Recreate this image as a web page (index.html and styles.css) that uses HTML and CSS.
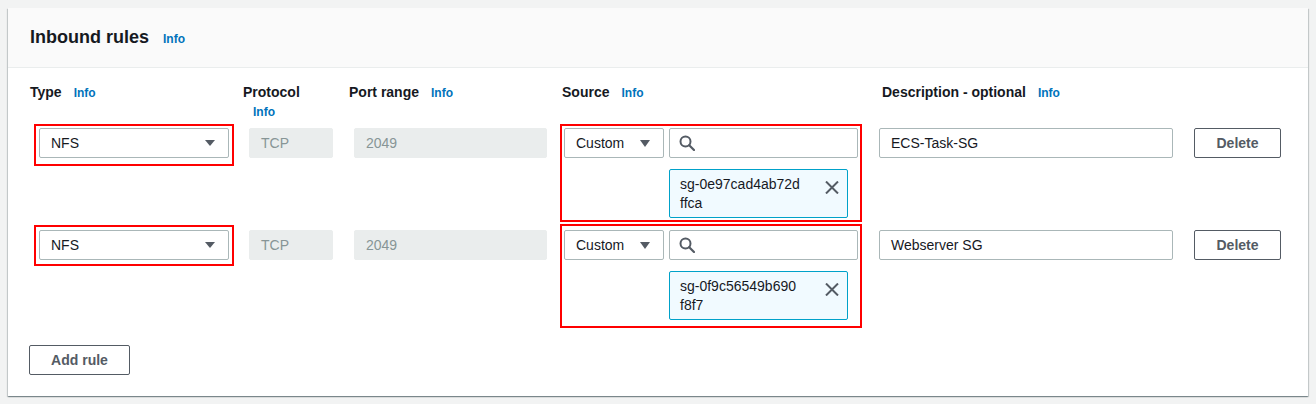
FILE: index.html
```html
<!DOCTYPE html>
<html>
<head>
<meta charset="utf-8">
<link rel="stylesheet" href="styles.css">
</head>
<body>
<div class="card">
  <div class="card-header">
    <h2 class="title">Inbound rules</h2><a class="info info-title">Info</a>
  </div>
  <div class="card-body">
    <div class="labels">
      <div class="lab lab-type">Type<a class="info">Info</a></div>
      <div class="lab lab-proto">Protocol<a class="info info-block">Info</a></div>
      <div class="lab lab-port">Port range<a class="info">Info</a></div>
      <div class="lab lab-source">Source<a class="info">Info</a></div>
      <div class="lab lab-desc">Description - optional<a class="info">Info</a></div>
    </div>

    <div class="rule-row">
      <div class="field select type-select marked marked-type">
        <span>NFS</span>
        <svg class="caret" width="10" height="6" viewBox="0 0 10 6"><polygon points="0,0 10,0 5,6" fill="#545b64"/></svg>
      </div>
      <div class="field disabled proto">TCP</div>
      <div class="field disabled port">2049</div>
      <div class="source marked marked-source">
        <div class="source-top">
          <div class="field select custom">
            <span>Custom</span>
            <svg class="caret" width="10" height="7" viewBox="0 0 10 7"><polygon points="0,0 10,0 5,7" fill="#545b64"/></svg>
          </div>
          <div class="field search">
            <svg width="16" height="16" viewBox="0 0 16 16"><circle cx="6.5" cy="6.5" r="5" fill="none" stroke="#545b64" stroke-width="2"/><line x1="10.2" y1="10.2" x2="15" y2="15" stroke="#545b64" stroke-width="2.2" stroke-linecap="round"/></svg>
          </div>
        </div>
        <div class="token">
          <span class="token-text">sg-0e97cad4ab72d<br>ffca</span>
          <svg class="token-x" width="14" height="13" viewBox="0 0 14 13"><path d="M1 0.5 L13 12.5 M13 0.5 L1 12.5" stroke="#545b64" stroke-width="2" fill="none"/></svg>
        </div>
      </div>
      <div class="field desc">ECS-Task-SG</div>
      <button class="btn delete">Delete</button>
    </div>

    <div class="rule-row">
      <div class="field select type-select marked marked-type2">
        <span>NFS</span>
        <svg class="caret" width="10" height="6" viewBox="0 0 10 6"><polygon points="0,0 10,0 5,6" fill="#545b64"/></svg>
      </div>
      <div class="field disabled proto">TCP</div>
      <div class="field disabled port">2049</div>
      <div class="source marked marked-source2">
        <div class="source-top">
          <div class="field select custom">
            <span>Custom</span>
            <svg class="caret" width="10" height="7" viewBox="0 0 10 7"><polygon points="0,0 10,0 5,7" fill="#545b64"/></svg>
          </div>
          <div class="field search">
            <svg width="16" height="16" viewBox="0 0 16 16"><circle cx="6.5" cy="6.5" r="5" fill="none" stroke="#545b64" stroke-width="2"/><line x1="10.2" y1="10.2" x2="15" y2="15" stroke="#545b64" stroke-width="2.2" stroke-linecap="round"/></svg>
          </div>
        </div>
        <div class="token">
          <span class="token-text">sg-0f9c56549b690<br>f8f7</span>
          <svg class="token-x" width="14" height="13" viewBox="0 0 14 13"><path d="M1 0.5 L13 12.5 M13 0.5 L1 12.5" stroke="#545b64" stroke-width="2" fill="none"/></svg>
        </div>
      </div>
      <div class="field desc">Webserver SG</div>
      <button class="btn delete">Delete</button>
    </div>

    <button class="btn add">Add rule</button>
  </div>
</div>
</body>
</html>
```

FILE: styles.css
```css
* { box-sizing: border-box; }
html, body { margin: 0; padding: 0; }
body {
  background: #f2f3f3;
  font-family: "Liberation Sans", Arial, sans-serif;
  color: #16191f;
  font-size: 14px;
  padding: 8px;
}
.card {
  width: 1300px;
  height: 388px;
  background: #fff;
  box-shadow: 0 1px 1px 0 rgba(0, 28, 36, 0.3), 1px 1px 1px 0 rgba(0, 28, 36, 0.15), -1px 1px 1px 0 rgba(0, 28, 36, 0.15);
}
.card-header {
  background: #fafafa;
  border-bottom: 1px solid #eaeded;
  height: 60px;
  padding: 18px 0 0 22px;
  display: flex;
  align-items: baseline;
}
.title {
  margin: 0;
  font-size: 18px;
  line-height: 22px;
  font-weight: bold;
}
.info {
  color: #0073bb;
  font-size: 12px;
  font-weight: bold;
  margin-left: 12px;
}
.info-title { margin-left: 14px; }
.card-body {
  padding: 13px 0 0 21px;
}
.labels {
  display: flex;
  height: 40px;
  margin-bottom: 7px;
  margin-left: 1px;
}
.lab {
  font-weight: bold;
  line-height: 22px;
}
.lab-type { width: 213px; }
.lab-proto { width: 106px; }
.lab-port { width: 213px; }
.lab-source { width: 320px; }
.info-block {
  display: block;
  line-height: 18px;
  margin-left: 10px;
}
.rule-row {
  display: flex;
  align-items: flex-start;
  padding-left: 10px;
  height: 90px;
  margin-bottom: 12px;
}
.field {
  height: 30px;
  border: 1px solid #aab7b8;
  border-radius: 2px;
  padding: 0 11px;
  display: flex;
  align-items: center;
  background: #fff;
  line-height: 20px;
}
.select { justify-content: space-between; padding-right: 13px; }
.type-select { width: 190px; }
.disabled {
  background: #eaeded;
  border-color: #eaeded;
  color: #879596;
}
.proto { width: 84px; margin-left: 20px; }
.port { width: 193px; margin-left: 21px; }
.source { width: 294px; margin-left: 17px; }
.source-top { display: flex; }
.custom { width: 100px; }
.search { width: 189px; margin-left: 5px; padding-left: 9px; }
.token {
  margin: 11px 0 0 105px;
  width: 179px;
  height: 49px;
  border: 1px solid #00a1c9;
  border-radius: 2px;
  background: #f1faff;
  padding: 5px 8px 4px 10px;
  display: flex;
  justify-content: space-between;
  align-items: flex-start;
}
.token-text { line-height: 19px; color: #16191f; }
.token-x { margin-top: 6px; }
.desc { width: 294px; margin-left: 21px; }
.btn {
  font-family: "Liberation Sans", Arial, sans-serif;
  font-size: 14px;
  font-weight: bold;
  color: #545b64;
  background: #fff;
  border: 1px solid #545b64;
  border-radius: 2px;
  height: 30px;
  padding: 0 21px;
  cursor: pointer;
}
.delete { width: 87px; padding: 0; margin-left: 21px; }
.add { width: 101px; padding: 0; margin-top: 13px; margin-left: 0; }
.marked { position: relative; }
.marked::after {
  content: "";
  position: absolute;
  border: 2px solid #f00;
  pointer-events: none;
}
.marked-type::after { top: -5px; bottom: -9px; left: -6px; right: -6px; }
.marked-type2::after { top: -6px; bottom: -7px; left: -6px; right: -6px; }
.marked-source::after { top: -4px; bottom: -4px; left: -4px; right: -4px; }
.marked-source2::after { top: -6px; bottom: -8px; left: -4px; right: -4px; }
```
